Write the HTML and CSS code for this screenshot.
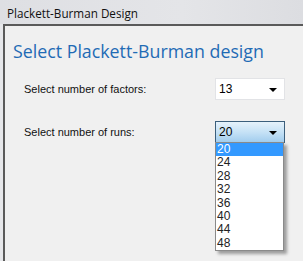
FILE: index.html
```html
<!DOCTYPE html>
<html lang="en">
<head>
    <meta charset="UTF-8">
    <title>Plackett-Burman Design</title>
    <link rel="stylesheet" href="styles.css">
</head>
<body>
    <div class="titlebar">Plackett-Burman Design</div>
    <div class="frame">
        <div class="panel">
            <h1>Select Plackett-Burman design</h1>

            <div class="row">
                <label>Select number of factors:</label>
                <div class="combo">
                    <span>13</span>
                    <span class="arrow"></span>
                </div>
            </div>

            <div class="row">
                <label>Select number of runs:</label>
                <div class="combo active">
                    <span>20</span>
                    <span class="arrow"></span>
                    <ul class="list">
                        <li class="selected">20</li>
                        <li>24</li>
                        <li>28</li>
                        <li>32</li>
                        <li>36</li>
                        <li>40</li>
                        <li>44</li>
                        <li>48</li>
                    </ul>
                </div>
            </div>
        </div>
    </div>
</body>
</html>
```

FILE: styles.css
```css
html, body {
    margin: 0;
    padding: 0;
    height: 100%;
    overflow: hidden;
}
body {
    font-family: 'Liberation Sans', Arial, sans-serif;
    background: #e6e7ea;
    color: #000;
    display: flex;
    flex-direction: column;
}
.titlebar {
    height: 24px;
    box-sizing: border-box;
    padding: 5px 0 0 7px;
    font-family: 'Open Sans', 'Noto Sans', sans-serif;
    font-size: 11.7px;
    color: #111;
    background: linear-gradient(90deg, #dedfe3 0%, #e4e5e8 60%, #dcdde1 100%);
}
.frame {
    flex: 1;
    padding-left: 3px;
}
.panel {
    height: 100%;
    background: #f0f0f0;
    border-top: 2px solid #5a5a5a;
    border-left: 2px solid #5a5a5a;
    padding: 13px 0 0 8px;
    box-sizing: border-box;
}
h1 {
    margin: 0 0 15px 0;
    font-family: 'Open Sans', 'Noto Sans', sans-serif;
    font-weight: normal;
    font-size: 17.8px;
    color: #1f6bb5;
}
.row {
    display: flex;
    align-items: center;
    padding-left: 11px;
    margin-bottom: 21px;
}
label {
    width: 191px;
    font-size: 11px;
    color: #111;
}
.combo {
    position: relative;
    width: 70px;
    height: 22px;
    box-sizing: border-box;
    border: 1px solid #e2e3e6;
    background: #fff;
    font-size: 12px;
    display: flex;
    align-items: center;
    padding-left: 3px;
}
.combo.active {
    border-color: #3c5f7c;
    background: linear-gradient(#e6f2fb 0%, #c6e2f6 50%, #a2cdee 100%);
}
.arrow {
    position: absolute;
    right: 7px;
    top: 9px;
    border-left: 4px solid transparent;
    border-right: 4px solid transparent;
    border-top: 4px solid #000;
}
.list {
    position: absolute;
    top: 20px;
    left: -1px;
    width: 67px;
    margin: 0;
    padding: 0;
    list-style: none;
    background: #fff;
    border: 1px solid #8a8a8a;
    box-shadow: 3px 3px 3px rgba(0, 0, 0, 0.35);
}
.list li {
    height: 13.4px;
    line-height: 13px;
    padding-left: 1px;
    font-size: 12px;
    color: #222;
}
.list li.selected {
    background: #3399ff;
    color: #fff;
}
```
